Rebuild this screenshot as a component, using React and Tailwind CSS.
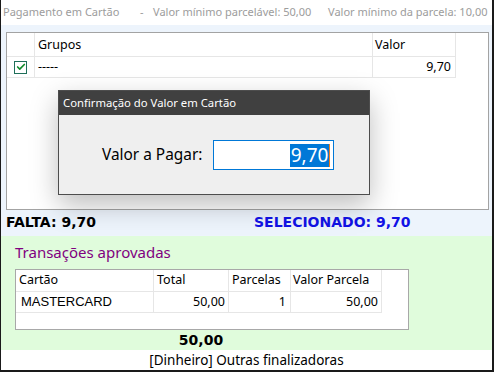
import { Check } from 'lucide-react';

const ui = { fontFamily: '"Noto Sans", "Open Sans", sans-serif' };
const bold = { fontFamily: '"DejaVu Sans", Verdana, sans-serif' };
const arial = { fontFamily: '"Liberation Sans", Arial, sans-serif' };

export default function App() {
  return (
    <div className="relative w-[494px] h-[372px] overflow-hidden bg-white border-l border-r-2 border-b-2 border-[#1a1a1a]" style={ui}>
      {/* cabeçalho */}
      <div className="h-[25px] flex items-center pl-[2px] text-[11px] text-[#9c9c9c] whitespace-nowrap">
        <span className="w-[137px]">Pagamento em Cartão</span>
        <span className="w-[13px]">-</span>
        <span className="w-[175px]">Valor mínimo parcelável: 50,00</span>
        <span>Valor mínimo da parcela: 10,00</span>
      </div>

      {/* área azul */}
      <div className="h-[211px] bg-[#edf4fc] pt-[7px] pl-[5px] pr-[3px] flex flex-col">
        <div className="h-[178px] bg-white border border-[#a3a3a3] text-[12.5px] text-black">
          <div className="w-fit">
            <div className="flex h-[24px] border-b border-[#e6e6e6]">
              <div className="w-[28px] border-r border-[#e6e6e6]" />
              <div className="w-[338px] border-r border-[#e6e6e6] pl-[3px] flex items-center pt-[2px]">Grupos</div>
              <div className="w-[83px] border-r border-[#e6e6e6] pl-[2px] flex items-center pt-[2px]">Valor</div>
            </div>
            <div className="flex h-[21px] border-b border-[#e6e6e6]">
              <div className="w-[28px] border-r border-[#e6e6e6] flex items-center justify-center">
                <div className="w-[13px] h-[13px] border border-[#1f6f5a] bg-white flex items-center justify-center">
                  <Check size={10} strokeWidth={4} className="text-[#0f8a2a]" />
                </div>
              </div>
              <div className="w-[338px] border-r border-[#e6e6e6] pl-[3px] flex items-center">-----</div>
              <div className="w-[83px] border-r border-[#e6e6e6] pr-[4px] flex items-center justify-end">9,70</div>
            </div>
          </div>
        </div>
        <div className="flex items-center h-[24px] text-[14px] font-bold" style={bold}>
          <span className="w-[248px] text-black">FALTA: 9,70</span>
          <span className="text-[#1212e6]">SELECIONADO: 9,70</span>
        </div>
      </div>

      {/* área verde */}
      <div className="h-[114px] bg-[#e0fcdc] pl-[14px] pt-[6px] flex flex-col">
        <div className="text-[15px] leading-[20px] text-[#800080]">Transações aprovadas</div>
        <div className="mt-[7px] w-[394px] h-[61px] bg-white border border-[#a8a8a8] text-[12.5px]">
          <div className="w-fit">
            <div className="flex h-[22px] border-b border-[#e6e6e6]">
              <div className="w-[138px] border-r border-[#e6e6e6] pl-[3px] flex items-center">Cartão</div>
              <div className="w-[75px] border-r border-[#e6e6e6] pl-[3px] flex items-center">Total</div>
              <div className="w-[62px] border-r border-[#e6e6e6] pl-[3px] flex items-center">Parcelas</div>
              <div className="w-[91px] border-r border-[#e6e6e6] pl-[2px] flex items-center">Valor Parcela</div>
            </div>
            <div className="flex h-[21px] border-b border-[#e6e6e6]">
              <div className="w-[138px] border-r border-[#e6e6e6] pl-[5px] flex items-center text-[13px]" style={arial}>MASTERCARD</div>
              <div className="w-[75px] border-r border-[#e6e6e6] pr-[3px] flex items-center justify-end">50,00</div>
              <div className="w-[62px] border-r border-[#e6e6e6] pr-[4px] flex items-center justify-end">1</div>
              <div className="w-[91px] border-r border-[#e6e6e6] pr-[3px] flex items-center justify-end">50,00</div>
            </div>
          </div>
        </div>
        <div className="w-[372px] text-center mt-[1px] text-[14px] font-bold leading-[18px]" style={bold}>50,00</div>
      </div>

      {/* rodapé */}
      <div className="h-[20px] flex items-center justify-center text-[13.5px] text-black">
        [Dinheiro] Outras finalizadoras
      </div>

      {/* diálogo */}
      <div className="absolute left-[57px] top-[90px] w-[312px] h-[105px] border border-[#4d4d4d] bg-[#efefef] shadow-[0_10px_26px_rgba(0,0,0,0.26)]">
        <div className="h-[24px] bg-[#404040] text-white text-[11.3px] flex items-center pl-[4px]">
          Confirmação do Valor em Cartão
        </div>
        <div className="flex items-center pt-[25px] pl-[43px]">
          <span className="text-[15.4px] text-black">Valor a Pagar:</span>
          <div className="ml-[11px] w-[121px] h-[30px] border border-[#0078d7] bg-white flex items-center justify-end pr-[3px]">
            <span className="bg-[#0078d7] text-white text-[19px] leading-[23px] px-[1px]">9,70</span>
            <span className="w-[1px] h-[23px] bg-[#f07a1a]" />
          </div>
        </div>
      </div>
    </div>
  );
}
